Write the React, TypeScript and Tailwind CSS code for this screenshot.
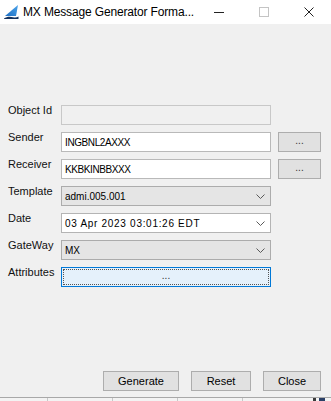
import React from "react";

const font = { fontFamily: '"Liberation Sans", Arial, sans-serif' };

const Chevron = () => (
  <svg width="9" height="5" viewBox="0 0 9 5" className="shrink-0">
    <path d="M0.5 0.5 L4.5 4.5 L8.5 0.5" fill="none" stroke="#5a5a5a" strokeWidth="1" />
  </svg>
);

const AppIcon = () => (
  <svg width="15" height="14" viewBox="0 0 15 14">
    <defs>
      <linearGradient id="sail" x1="0" y1="1" x2="1" y2="0">
        <stop offset="0" stopColor="#1e6fc4" />
        <stop offset="1" stopColor="#4aa3ea" />
      </linearGradient>
    </defs>
    <path d="M1 11 L14 0 L12 11 Z" fill="url(#sail)" />
    <path d="M0 13.5 C3 11 7 11.5 9 12.2 C11 12.8 13 12.5 14.5 11.5 L14.5 14 L0 14 Z" fill="#12315e" />
  </svg>
);

const Row = ({ label, children }: { label: string; children: React.ReactNode }) => (
  <div className="flex items-start h-[20px]">
    <div className="w-[61px] shrink-0 pl-[8px] text-[11px] leading-[13px] text-[#111] whitespace-nowrap -mt-[1px]">{label}</div>
    {children}
  </div>
);

const Field = ({ value, disabled }: { value?: string; disabled?: boolean }) => (
  <div
    className={
      "w-[210px] h-[20px] border flex items-center px-[3px] text-[10px] tracking-[-0.4px] text-black " +
      (disabled ? "bg-[#f0f0f0] border-[#c8c8c8]" : "bg-white border-[#b9b9b9]")
    }
  >
    {value}
  </div>
);

const Combo = ({ value, editable, wide }: { value: string; editable?: boolean; wide?: boolean }) => (
  <div
    className={
      "w-[210px] h-[20px] border flex items-center justify-between pl-[3px] pr-[5px] text-[10px] text-black " +
      (editable ? "bg-white border-[#b4b4b4]" : "bg-[#e5e5e5] border-[#acacac]")
    }
  >
    <span className={wide ? "tracking-[0.7px]" : ""}>{value}</span>
    <Chevron />
  </div>
);

const SmallButton = () => (
  <div className="ml-[7px] w-[43px] h-[20px] bg-[#e1e1e1] border border-[#adadad] flex items-center justify-center text-[10px] text-[#333] pb-[3px]">
    ...
  </div>
);

const Button = ({ label, w }: { label: string; w: string }) => (
  <div className={"h-[20px] bg-[#e1e1e1] border border-[#adadad] flex items-center justify-center text-[11px] text-black " + w}>
    {label}
  </div>
);

export default function App() {
  return (
    <div className="w-[331px] h-[401px] flex flex-col bg-[#f0f0f0] overflow-hidden" style={font}>
      {/* title bar */}
      <div className="h-[24px] bg-white flex items-center shrink-0">
        <div className="pl-[4px] pr-[4px] flex items-center">
          <AppIcon />
        </div>
        <div className="text-[12px] tracking-[-0.15px] text-black whitespace-nowrap">MX Message Generator Forma...</div>
        <div className="ml-auto flex items-center h-full">
          <div className="w-[45px] h-full flex items-center justify-center">
            <div className="w-[10px] h-px bg-[#222]" />
          </div>
          <div className="w-[45px] h-full flex items-center justify-center">
            <div className="w-[10px] h-[10px] border border-[#c4c4c4]" />
          </div>
          <div className="w-[45px] h-full flex items-center justify-center">
            <svg width="10" height="10" viewBox="0 0 10 10">
              <path d="M0.5 0.5 L9.5 9.5 M9.5 0.5 L0.5 9.5" stroke="#222" strokeWidth="1" />
            </svg>
          </div>
        </div>
      </div>

      {/* form */}
      <div className="flex flex-col gap-[7px] pt-[81px]">
        <Row label="Object Id">
          <Field disabled />
        </Row>
        <Row label="Sender">
          <Field value="INGBNL2AXXX" />
          <SmallButton />
        </Row>
        <Row label="Receiver">
          <Field value="KKBKINBBXXX" />
          <SmallButton />
        </Row>
        <Row label="Template">
          <Combo value="admi.005.001" />
        </Row>
        <Row label="Date">
          <Combo value="03 Apr 2023 03:01:26 EDT" editable wide />
        </Row>
        <Row label="GateWay">
          <Combo value="MX" />
        </Row>
        <Row label="Attributes">
          <div className="w-[210px] h-[20px] bg-[#e5f1fb] border border-[#0078d7] p-[1px]">
            <div className="w-full h-full border border-dotted border-[#555] flex items-center justify-center text-[10px] text-[#333] pb-[3px]">
              ...
            </div>
          </div>
        </Row>
      </div>

      {/* bottom buttons */}
      <div className="mt-auto flex justify-end gap-[12px] pr-[10px] pb-[6px]">
        <Button label="Generate" w="w-[76px]" />
        <Button label="Reset" w="w-[60px]" />
        <Button label="Close" w="w-[58px]" />
      </div>

      {/* strip of next window below */}
      <div className="h-[4px] shrink-0 border-t border-[#a8a8a8] bg-[#f3f3f3] flex">
        <div className="w-[48px] border-r border-[#c8c8c8]" />
        <div className="w-[65px] border-r border-[#c8c8c8]" />
        <div className="w-[65px] border-r border-[#c8c8c8]" />
        <div className="w-[65px] border-r border-[#c8c8c8]" />
        <div className="flex-1 flex justify-end pr-[6px] gap-[3px]">
          <div className="w-[3px] bg-[#3a3a3a]" />
          <div className="w-[6px] bg-[#2a3f66]" />
        </div>
      </div>
    </div>
  );
}
